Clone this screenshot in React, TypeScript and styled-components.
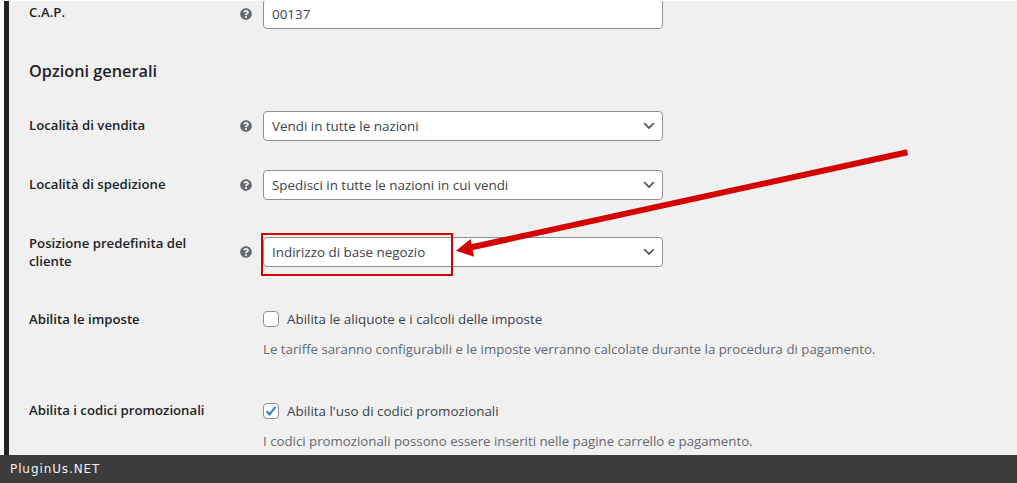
import React from "react";
import styled, { createGlobalStyle } from "styled-components";
import { FaQuestionCircle } from "react-icons/fa";

const GlobalStyle = createGlobalStyle`
  html, body {
    margin: 0;
    padding: 0;
    background: #fff;
  }
`;

const Screen = styled.div`
  position: relative;
  display: flex;
  flex-direction: column;
  width: 1017px;
  height: 483px;
  overflow: hidden;
  font-family: "Open Sans", "Noto Sans", sans-serif;
  font-size: 13.4px;
`;

const Frame = styled.div`
  flex: 1;
  display: flex;
  min-height: 0;
  padding: 1px 0 0 4px;
`;

const SideBar = styled.div`
  width: 5px;
  background: #1d2327;
`;

const Content = styled.div`
  flex: 1;
  min-width: 0;
  padding-left: 20px;
  background: #f0f0f1;
  overflow: hidden;
`;

const Row = styled.div<{ $top: number; $height: number }>`
  display: grid;
  grid-template-columns: 211px 23px 400px;
  align-items: start;
  height: ${(props) => props.$height}px;
  padding-top: ${(props) => props.$top}px;
  box-sizing: border-box;
`;

const FirstRow = styled(Row)`
  margin-top: -2px;
`;

const Label = styled.div<{ $offset?: number }>`
  margin-top: ${(props) => props.$offset ?? 5}px;
  font-size: 13.2px;
  font-weight: 600;
  line-height: 18px;
  color: #1d2327;
`;

const HelpSlot = styled.div`
  display: flex;
  height: 30px;
  align-items: center;
  color: #646970;
`;

const Field = styled.div`
  display: flex;
  align-items: center;
  justify-content: space-between;
  box-sizing: border-box;
  height: 30px;
  padding: 0 5px 0 8px;
  background: #fff;
  border: 1px solid #8c8f94;
  border-radius: 4px;
  color: #3c434a;
`;

const Chevron = styled.svg`
  width: 16px;
  height: 16px;
  fill: #555;
`;

const Heading = styled.h2`
  margin: 0;
  height: 52px;
  padding-top: 14px;
  box-sizing: border-box;
  font-size: 16.3px;
  font-weight: 550;
  line-height: 24px;
  color: #1d2327;
`;

const CheckLine = styled.div`
  display: flex;
  align-items: center;
  gap: 8px;
  height: 16px;
  color: #3c434a;
`;

const CheckBox = styled.span`
  display: flex;
  align-items: center;
  justify-content: center;
  box-sizing: border-box;
  width: 16px;
  height: 16px;
  background: #fff;
  border: 1px solid #8c8f94;
  border-radius: 4px;
`;

const Description = styled.div`
  margin-top: 13px;
  font-size: 13.25px;
  line-height: 18px;
  white-space: nowrap;
  color: #646970;
`;

const Footer = styled.div`
  height: 28px;
  padding-left: 10px;
  background: #3c3c3c;
  color: #f1f1f1;
  font-family: "DejaVu Sans", sans-serif;
  font-size: 12px;
  letter-spacing: 0.9px;
  line-height: 28px;
`;

const Highlight = styled.div`
  position: absolute;
  left: 261px;
  top: 233px;
  width: 192px;
  height: 43px;
  box-sizing: border-box;
  border: 2px solid #d40000;
`;

const ArrowLayer = styled.svg`
  position: absolute;
  left: 0;
  top: 0;
  pointer-events: none;
`;

const Help = () => (
  <HelpSlot>
    <FaQuestionCircle size={12} />
  </HelpSlot>
);

const SelectField = ({ children }: { children: string }) => (
  <Field>
    {children}
    <Chevron viewBox="0 0 20 20">
      <path d="M5 6l5 5 5-5 2 1-7 7-7-7 2-1z" />
    </Chevron>
  </Field>
);

export default function App() {
  return (
    <Screen>
      <GlobalStyle />
      <Frame>
        <SideBar />
        <Content>
          <FirstRow $top={0} $height={46}>
            <Label $offset={4}>C.A.P.</Label>
            <Help />
            <Field>00137</Field>
          </FirstRow>
          <Heading>Opzioni generali</Heading>
          <Row $top={14} $height={58}>
            <Label>Località di vendita</Label>
            <Help />
            <SelectField>Vendi in tutte le nazioni</SelectField>
          </Row>
          <Row $top={15} $height={67}>
            <Label>Località di spedizione</Label>
            <Help />
            <SelectField>Spedisci in tutte le nazioni in cui vendi</SelectField>
          </Row>
          <Row $top={15} $height={74}>
            <Label $offset={-3}>
              Posizione predefinita del
              <br />
              cliente
            </Label>
            <Help />
            <SelectField>Indirizzo di base negozio</SelectField>
          </Row>
          <Row $top={15} $height={92}>
            <Label $offset={-1}>Abilita le imposte</Label>
            <span />
            <div>
              <CheckLine>
                <CheckBox />
                Abilita le aliquote e i calcoli delle imposte
              </CheckLine>
              <Description>
                Le tariffe saranno configurabili e le imposte verranno calcolate
                durante la procedura di pagamento.
              </Description>
            </div>
          </Row>
          <Row $top={15} $height={80}>
            <Label $offset={-2}>Abilita i codici promozionali</Label>
            <span />
            <div>
              <CheckLine>
                <CheckBox>
                  <svg width="14" height="14" viewBox="0 0 14 14">
                    <path
                      d="M2.6 7.2 L5.6 10.4 L11.4 2.8"
                      fill="none"
                      stroke="#3582c4"
                      strokeWidth="2.2"
                    />
                  </svg>
                </CheckBox>
                Abilita l'uso di codici promozionali
              </CheckLine>
              <Description>
                I codici promozionali possono essere inseriti nelle pagine
                carrello e pagamento.
              </Description>
            </div>
          </Row>
        </Content>
      </Frame>
      <Footer>PluginUs.NET</Footer>
      <Highlight />
      <ArrowLayer width="1017" height="483" viewBox="0 0 1017 483">
        <path d="M907.5 152.3 L468 248" stroke="#d40000" strokeWidth="6" fill="none" />
        <path d="M456 250.7 L470.7 239 L474 256.7 Z" fill="#d40000" />
      </ArrowLayer>
    </Screen>
  );
}
